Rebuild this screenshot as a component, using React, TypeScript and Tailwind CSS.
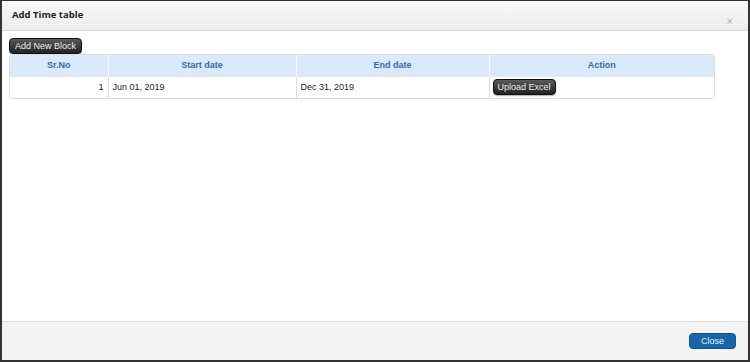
const rows = [{ no: 1, start: "Jun 01, 2019", end: "Dec 31, 2019" }]

const darkBtn =
    "block rounded-[4px] border border-[#111] bg-gradient-to-b from-[#5a5a5a] to-[#222] text-[#eee] text-[9px] leading-none shadow-[0_1px_1px_rgba(0,0,0,0.3)]"

const App = () => {
    return (
        <div className="w-[750px] h-[362px] bg-[#333] p-[2px] pt-[1px] font-['Liberation_Sans',Arial,sans-serif]">
            <div className="w-full h-full flex flex-col bg-white">
                <div className="h-[30px] shrink-0 flex items-start justify-between px-[10px] bg-gradient-to-b from-[#f9f9f9] to-[#ececec] border-b border-[#d6d6d6]">
                    <h3 className="mt-[7px] text-[9.5px] leading-[14px] font-bold text-[#222] font-['Open_Sans',sans-serif]">Add Time table</h3>
                    <span className="mt-[15px] mr-[5px] text-[11px] leading-none text-[#aaa]">×</span>
                </div>
                <div className="flex-1 px-[7px] pt-[7px]">
                    <button className={`${darkBtn} h-[16px] px-[5px]`}>Add New Block</button>
                    <div className="w-[706px] border border-[#ddd] rounded-[3px] overflow-hidden">
                        <table className="w-full border-collapse text-[9px] text-[#222]">
                            <thead>
                                <tr className="bg-[#dbe9fc] h-[21px] text-[#2f6cb0] font-bold">
                                    <th className="w-[98px] border-r border-white">Sr.No</th>
                                    <th className="w-[188px] border-r border-white">Start date</th>
                                    <th className="w-[193px] border-r border-white">End date</th>
                                    <th>Action</th>
                                </tr>
                            </thead>
                            <tbody>
                                {rows.map((r) => (
                                    <tr key={r.no} className="h-[22px] border-t border-[#e6e6e6]">
                                        <td className="text-right pr-[4px] border-r border-[#ddd]">{r.no}</td>
                                        <td className="pl-[4px] border-r border-[#ddd]">{r.start}</td>
                                        <td className="pl-[4px] border-r border-[#ddd]">{r.end}</td>
                                        <td className="pl-[3px]">
                                            <button className={`${darkBtn} h-[16px] px-[4px]`}>Upload Excel</button>
                                        </td>
                                    </tr>
                                ))}
                            </tbody>
                        </table>
                    </div>
                </div>
                <div className="h-[39px] shrink-0 flex items-center justify-end pr-[12px] bg-[#f3f3f3] border-t border-[#ddd]">
                    <button className="h-[16px] w-[47px] rounded-[4px] bg-[#1565a8] border border-[#0f5590] text-[#e8f0f8] text-[9px] leading-none">Close</button>
                </div>
            </div>
        </div>
    )
}

export default App
